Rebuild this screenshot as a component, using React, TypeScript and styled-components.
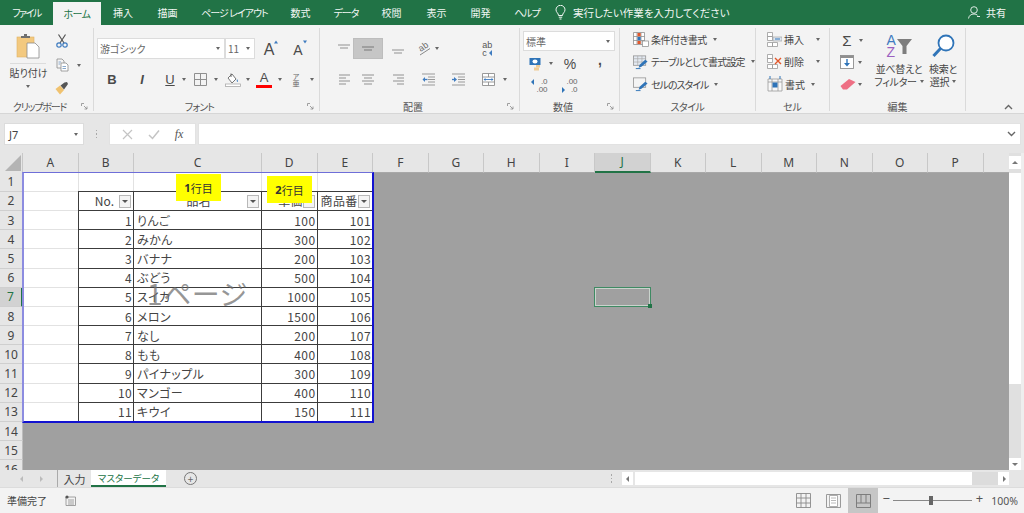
import styled, { createGlobalStyle } from 'styled-components'

const GlobalStyle = createGlobalStyle`
  html, body { margin: 0; padding: 0; background: #f3f3f3; }
  body {
    font-family: "Noto Sans CJK JP", "Noto Sans", sans-serif;
    font-feature-settings: "palt";
    color: #444;
    overflow: hidden;
  }
`

const Page = styled.div`
  width: 1024px;
  height: 513px;
  display: flex;
  flex-direction: column;
  overflow: hidden;
`

/* title bar */
const TitleBar = styled.div`
  height: 25px;
  flex: none;
  background: #217346;
  display: flex;
  align-items: center;
  color: #f2f7f4;
  font-size: 10px;
`
const Tab = styled.div<{ $w: number; $active?: boolean; $ls?: number }>`
  width: ${p => p.$w}px;
  flex: none;
  height: ${p => (p.$active ? '23px' : '100%')};
  display: flex;
  align-items: center;
  justify-content: center;
  letter-spacing: ${p => p.$ls ?? 0}px;
  margin-top: ${p => (p.$active ? '2px' : '0')};
  background: ${p => (p.$active ? '#f3f3f3' : 'transparent')};
  color: ${p => (p.$active ? '#217346' : 'inherit')};
`
const TellMe = styled.div`
  display: flex;
  align-items: center;
  gap: 7px;
  margin-left: 2px;
  flex: 1;
  font-size: 10.5px;
`
const Share = styled.div`
  display: flex;
  align-items: center;
  gap: 6px;
  margin-right: 18px;
`

/* ribbon */
const Ribbon = styled.div`
  height: 89px;
  flex: none;
  display: flex;
  box-sizing: border-box;
  padding: 3px 0 0;
  background: #f3f3f3;
  border-bottom: 1px solid #d6d6d6;
`
const Group = styled.div<{ $w: number }>`
  width: ${p => p.$w}px;
  flex: none;
  box-sizing: border-box;
  margin-bottom: 2px;
  border-right: 1px solid #dadada;
  display: flex;
  flex-direction: column;
`
const GroupBody = styled.div<{ $pl?: number; $row?: boolean }>`
  height: 73px;
  flex: none;
  display: flex;
  flex-direction: ${p => (p.$row ? 'row' : 'column')};
  padding-left: ${p => p.$pl ?? 0}px;
`
const GroupLabel = styled.div<{ $pr?: number; $ls?: number }>`
  position: relative;
  flex: 1;
  text-align: center;
  box-sizing: border-box;
  padding-right: ${p => p.$pr ?? 0}px;
  font-size: 10px;
  line-height: 11px;
  letter-spacing: ${p => p.$ls ?? 0}px;
  color: #555;
`
const Launcher = styled.svg`
  position: absolute;
  right: 5px;
  top: 2px;
`
const ToolRow = styled.div<{ $mt?: number; $h?: number }>`
  display: flex;
  align-items: center;
  height: ${p => p.$h ?? 21}px;
  margin-top: ${p => p.$mt ?? 0}px;
`
const Slot = styled.div<{ $w: number; $on?: boolean }>`
  width: ${p => p.$w}px;
  height: 100%;
  flex: none;
  display: flex;
  align-items: center;
  justify-content: center;
  gap: 3px;
  box-sizing: border-box;
  background: ${p => (p.$on ? '#c6c6c6' : 'transparent')};
  border: ${p => (p.$on ? '1px solid #bdbdbd' : 'none')};
`
const Caret = styled.span`
  width: 0;
  height: 0;
  flex: none;
  border-left: 2.5px solid transparent;
  border-right: 2.5px solid transparent;
  border-top: 3px solid #666;
`
const PasteButton = styled.div`
  width: 51px;
  margin-left: 2px;
  flex: none;
  display: flex;
  flex-direction: column;
  align-items: center;
  padding-top: 5px;
  font-size: 10px;
`
const PasteLabel = styled.div`
  width: 36px;
  margin-top: 4px;
  padding-top: 2px;
  border-top: 1px solid #dcdcdc;
  text-align: center;
  line-height: 14px;
  white-space: nowrap;
  margin-bottom: 5px;
`
const ClipTools = styled.div`
  display: flex;
  flex-direction: column;
  width: 40px;
`
const SelectBox = styled.div<{ $w: number; $h?: number }>`
  width: ${p => p.$w}px;
  height: ${p => p.$h ?? 21}px;
  flex: none;
  box-sizing: border-box;
  background: #fff;
  border: 1px solid #dcdcdc;
  display: flex;
  align-items: center;
  justify-content: space-between;
  padding: 0 4px 0 2px;
  font-size: 10px;
  color: #666;
`
const LetterTool = styled.span<{ $size?: number; $bold?: boolean; $italic?: boolean; $under?: boolean; $up?: number }>`
  font-family: "Liberation Sans", sans-serif;
  font-size: ${p => p.$size ?? 13}px;
  font-weight: ${p => (p.$bold ? 700 : 400)};
  font-style: ${p => (p.$italic ? 'italic' : 'normal')};
  text-decoration: ${p => (p.$under ? 'underline' : 'none')};
  margin-top: ${p => -(p.$up ?? 0)}px;
  color: #4a4a4a;
  line-height: 1;
`
const GrowWrap = styled.span`
  position: relative;
  display: inline-block;
  line-height: 1;
`
const GrowMark = styled.svg`
  position: absolute;
  right: -4px;
  top: 0;
`
const FontColorTool = styled.span`
  display: flex;
  flex-direction: column;
  align-items: center;
  font-family: "Liberation Sans", sans-serif;
  font-size: 13px;
  line-height: 12px;
  color: #4a4a4a;
`
const RedBar = styled.span`
  width: 16px;
  height: 3px;
  margin-top: 1px;
  background: #f00;
`
const KanaTool = styled.span`
  display: flex;
  flex-direction: column;
  align-items: center;
  font-size: 7px;
  line-height: 7px;
  color: #666;
`
const WrapTool = styled.span`
  display: flex;
  flex-direction: column;
  font-size: 9px;
  line-height: 8px;
  font-family: "Liberation Sans", sans-serif;
  color: #555;
`
const WrapLine = styled.span`
  display: flex;
  align-items: center;
  gap: 1px;
`
const DecimalTool = styled.span`
  display: grid;
  grid-template-columns: auto auto;
  font-family: "Liberation Sans", sans-serif;
  font-size: 8px;
  line-height: 8px;
  color: #666;
  justify-items: end;
  align-items: center;
`
const StyleRow = styled.div<{ $pl?: number; $ls?: number }>`
  display: flex;
  align-items: center;
  height: 22.5px;
  padding-left: ${p => p.$pl ?? 13}px;
  font-size: 10px;
  letter-spacing: ${p => p.$ls ?? 0}px;
  gap: 2px;
  white-space: nowrap;
  svg { flex: none; }
`
const CaretGap = styled.span<{ $w: number }>`
  flex: none;
  width: ${p => p.$w}px;
`
const RibbonEnd = styled.div`
  flex: 1;
  display: flex;
  justify-content: flex-end;
  align-items: flex-end;
  padding: 0 11px 3px 0;
`
const EditColumn = styled.div`
  width: 42px;
  flex: none;
  display: flex;
  flex-direction: column;
`
const BigTool = styled.div<{ $w: number }>`
  width: ${p => p.$w}px;
  flex: none;
  display: flex;
  flex-direction: column;
  align-items: center;
  padding-top: 6px;
  font-size: 10px;
  line-height: 12.5px;
  letter-spacing: -0.3px;
  white-space: nowrap;
`
const BigLabel = styled.div`
  margin-top: 5px;
  text-align: center;
  display: flex;
  flex-direction: column;
  align-items: center;
`
const InlineLine = styled.span`
  display: flex;
  align-items: center;
  gap: 3px;
`
const SortLetters = styled.span`
  display: flex;
  flex-direction: column;
  font-family: "Liberation Sans", sans-serif;
  font-size: 14px;
  line-height: 12px;
  margin-right: 1px;
`
const SortA = styled.span`
  color: #3f7cc0;
`
const SortZ = styled.span`
  color: #9a5fc0;
`

/* formula bar */
const FormulaBar = styled.div`
  height: 39px;
  flex: none;
  box-sizing: border-box;
  background: #e6e6e6;
  display: flex;
  padding: 9px 4px 8px 4px;
`
const NameBox = styled.div`
  width: 80px;
  height: 22px;
  box-sizing: border-box;
  background: #fff;
  border: 1px solid #dcdcdc;
  display: flex;
  align-items: center;
  justify-content: space-between;
  padding: 0 5px 0 4px;
  font-family: "Noto Sans", sans-serif;
  font-size: 11px;
`
const Grip = styled.div`
  width: 25px;
  display: flex;
  flex-direction: column;
  align-items: center;
  justify-content: center;
  gap: 2px;
`
const GripDot = styled.span`
  width: 1.5px;
  height: 1.5px;
  background: #a8a8a8;
`
const FxBox = styled.div`
  width: 87px;
  height: 22px;
  box-sizing: border-box;
  background: #fff;
  border: 1px solid #e2e2e2;
  display: flex;
  align-items: center;
  justify-content: space-around;
  padding: 0 4px;
  margin-right: 2px;
`
const FxText = styled.span`
  font-family: "Liberation Serif", serif;
  font-style: italic;
  font-size: 12px;
  color: #555;
`
const FormulaInput = styled.div`
  flex: 1;
  margin-right: -1px;
  height: 22px;
  box-sizing: border-box;
  background: #fff;
  border: 1px solid #e2e2e2;
  display: flex;
  align-items: center;
  justify-content: flex-end;
  padding-right: 4px;
`

/* sheet */
const SheetArea = styled.div`
  height: 317px;
  flex: none;
  display: flex;
  background: #e6e6e6;
`
const GridView = styled.div`
  position: relative;
  width: 1009px;
  flex: none;
  overflow: hidden;
`
const SheetGrid = styled.div`
  display: grid;
  grid-template-columns: 23px 55.5px 55.5px 128px repeat(14, 55.5px);
  grid-template-rows: 19.6px;
  grid-auto-rows: 19.2px;
`
const Corner = styled.div`
  background: #e6e6e6;
  border-right: 1px solid #c8c8c8;
  display: flex;
  align-items: flex-end;
  justify-content: flex-end;
  padding: 0 1px 2px 0;
  box-sizing: border-box;
`
const ColHead = styled.div<{ $active?: boolean }>`
  box-sizing: border-box;
  display: flex;
  align-items: center;
  justify-content: center;
  font-family: "Noto Sans", sans-serif;
  font-size: 12px;
  background: ${p => (p.$active ? '#d2d2d2' : '#e6e6e6')};
  color: ${p => (p.$active ? '#217346' : '#444')};
  border-right: 1px solid #c8c8c8;
  border-bottom: ${p => (p.$active ? '2px solid #217346' : '1px solid #a8a8a8')};
`
const RowHead = styled.div<{ $active?: boolean }>`
  box-sizing: border-box;
  display: flex;
  align-items: center;
  justify-content: center;
  font-family: "Noto Sans", sans-serif;
  font-size: 12px;
  background: ${p => (p.$active ? '#d2d2d2' : '#e6e6e6')};
  color: ${p => (p.$active ? '#217346' : '#444')};
  border-bottom: 1px solid #cfcfcf;
  border-right: ${p => (p.$active ? '2px solid #217346' : '1px solid #bdbdbd')};
`
const Cell = styled.div<{ $kind: 'blank' | 'grid' | 'table'; $right?: boolean }>`
  position: relative;
  box-sizing: border-box;
  min-width: 0;
  overflow: hidden;
  display: flex;
  align-items: center;
  justify-content: ${p => (p.$right ? 'flex-end' : 'flex-start')};
  padding: 0 1px 0 3px;
  font-size: 12px;
  letter-spacing: 0.4px;
  white-space: nowrap;
  background: ${p => (p.$kind === 'blank' ? '#a0a0a0' : '#fff')};
  border-right: ${p =>
    p.$kind === 'blank' ? 'none' : p.$kind === 'grid' ? '1px solid #e2e2e2' : '1px solid #3c3c3c'};
  border-bottom: ${p =>
    p.$kind === 'blank' ? 'none' : p.$kind === 'table' ? '1px solid #3c3c3c' : '1px solid #e2e2e2'};
`
const HeadText = styled.span<{ $center?: boolean; $pr?: number }>`
  flex: 1;
  text-align: ${p => (p.$center ? 'center' : 'right')};
  padding-right: ${p => p.$pr ?? 0}px;
  letter-spacing: 0;
`
const FilterButton = styled.div`
  position: absolute;
  right: 2px;
  top: 3px;
  width: 12px;
  height: 13px;
  box-sizing: border-box;
  background: #f4f4f4;
  border: 1px solid #b8b8b8;
  display: flex;
  align-items: center;
  justify-content: center;
`
const PageFrame = styled.div`
  position: absolute;
  left: 22px;
  top: 19px;
  width: 352px;
  height: 251px;
  box-sizing: border-box;
  border-left: 2px solid #8c8ce0;
  border-top: 1px solid #6e6ed8;
  border-right: 2px solid #1212d0;
  border-bottom: 2px solid #1212d0;
  pointer-events: none;
`
const TableRule = styled.div<{ $vertical?: boolean }>`
  position: absolute;
  left: 78px;
  top: 38px;
  width: ${p => (p.$vertical ? '1px' : '295px')};
  height: ${p => (p.$vertical ? '231px' : '1px')};
  background: #3c3c3c;
`
const YellowNote = styled.div<{ $x: number; $y: number }>`
  position: absolute;
  left: ${p => p.$x}px;
  top: ${p => p.$y}px;
  width: 45px;
  height: 27px;
  background: #ffff00;
  display: flex;
  align-items: center;
  justify-content: center;
  font-size: 11px;
  color: #333;
`
const NoteDigit = styled.b`
  font-family: "Noto Sans", sans-serif;
`
const Watermark = styled.div`
  position: absolute;
  left: 147px;
  top: 120px;
  font-size: 28px;
  line-height: 40px;
  letter-spacing: 0.5px;
  color: rgba(110, 110, 110, 0.72);
  white-space: nowrap;
  pointer-events: none;
`
const Selection = styled.div`
  position: absolute;
  left: 594px;
  top: 134px;
  width: 57px;
  height: 20px;
  box-sizing: border-box;
  border: 1.5px solid #3f8a63;
  box-shadow: inset 0 0 0 1px #c9d3cc;
`
const FillHandle = styled.span`
  position: absolute;
  right: -2px;
  bottom: -2px;
  width: 4px;
  height: 4px;
  background: #217346;
`

/* scrollbars */
const VScroll = styled.div`
  width: 12px;
  flex: none;
  box-sizing: border-box;
  padding-top: 3px;
  background: #e0e0e0;
  display: flex;
  flex-direction: column;
`
const ScrollButton = styled.div<{ $w?: number; $h?: number }>`
  width: ${p => p.$w ?? 12}px;
  height: ${p => p.$h ?? 12}px;
  flex: none;
  background: #fff;
  display: flex;
  align-items: center;
  justify-content: center;
`
const VThumb = styled.div`
  height: 211px;
  flex: none;
  margin-top: 4px;
  background: #fff;
`
const Spacer = styled.div`
  flex: 1;
`
const EdgeStrip = styled.div`
  flex: 1;
  background: #eeeeee;
`
const TabsRow = styled.div`
  height: 17px;
  flex: none;
  background: #e6e6e6;
  display: flex;
  align-items: center;
  font-size: 11px;
`
const TabNav = styled.div`
  width: 58px;
  flex: none;
  height: 100%;
  display: flex;
  align-items: center;
  justify-content: center;
  gap: 13px;
  box-sizing: border-box;
  padding-left: 6px;
  border-right: 1px solid #aaa;
`
const SheetTab = styled.div<{ $active?: boolean; $w: number }>`
  width: ${p => p.$w}px;
  flex: none;
  height: 100%;
  display: flex;
  align-items: center;
  justify-content: center;
  box-sizing: border-box;
  font-size: ${p => (p.$active ? '9.5px' : '11px')};
  background: ${p => (p.$active ? '#fff' : 'transparent')};
  color: ${p => (p.$active ? '#217346' : '#444')};
  border-bottom: ${p => (p.$active ? '2px solid #217346' : 'none')};
`
const AddSheet = styled.div`
  margin-left: 18px;
  width: 11px;
  height: 11px;
  flex: none;
  border: 1px solid #777;
  border-radius: 50%;
  color: #666;
  display: flex;
  align-items: center;
  justify-content: center;
  font-size: 10px;
  line-height: 1;
`
const TabGrip = styled(Grip)`
  margin-left: auto;
  width: 21px;
`
const HThumb = styled.div`
  width: 337px;
  height: 13px;
  margin-left: 2px;
  background: #fff;
  flex: none;
`
const HTrack = styled.div`
  width: 26px;
  height: 13px;
  flex: none;
  background: #dcdcdc;
`
const HEnd = styled.div`
  width: 15px;
  flex: none;
`

/* status bar */
const StatusBar = styled.div`
  flex: 1;
  background: #f3f3f3;
  border-top: 1px solid #dcdcdc;
  display: flex;
  align-items: stretch;
  font-size: 10px;
  padding-left: 7px;
`
const StatusText = styled.div`
  display: flex;
  align-items: center;
  gap: 18px;
  flex: 1;
`
const ViewButton = styled.div<{ $w: number; $on?: boolean }>`
  width: ${p => p.$w}px;
  flex: none;
  display: flex;
  align-items: center;
  justify-content: center;
  background: ${p => (p.$on ? '#c6c6c6' : 'transparent')};
`
const Zoom = styled.div`
  display: flex;
  align-items: center;
  padding: 0 6px 0 4px;
  gap: 3px;
  font-family: "Noto Sans", sans-serif;
  font-size: 10.5px;
`
const ZoomSign = styled.span`
  font-size: 13px;
  line-height: 13px;
  margin-top: -5px;
  color: #555;
`
const ZoomTrack = styled.div`
  position: relative;
  width: 79px;
  height: 1px;
  background: #888;
  margin-right: 1px;
`
const ZoomThumb = styled.span`
  position: absolute;
  left: 36px;
  top: -4px;
  width: 4px;
  height: 9px;
  background: #666;
`
const ZoomValue = styled.span`
  margin-left: 5px;
  color: #555;
`

/* icons */
const Launch = () => (
  <Launcher width="7" height="7" viewBox="0 0 7 7">
    <path d="M0.5 3V0.5H3M3 3L6 6M6 3.5V6H3.5" fill="none" stroke="#8a8a8a" strokeWidth="0.8" />
  </Launcher>
)

const Bars = ({ rows, w = 16, h = 14, color = '#9a9a9a' }: { rows: number[][]; w?: number; h?: number; color?: string }) => (
  <svg width={w} height={h} viewBox={`0 0 ${w} ${h}`}>
    {rows.map(([x1, x2, y]) => (
      <line key={`${x1}-${y}`} x1={x1} x2={x2} y1={y} y2={y} stroke={color} strokeWidth="1.1" />
    ))}
  </svg>
)

const PasteIcon = () => (
  <svg width="24" height="26" viewBox="0 0 24 26">
    <rect x="1" y="4" width="17" height="20" fill="#f3c97f" stroke="#e0b264" strokeWidth="0.6" />
    <path d="M5 5V3H8V1H11V3H14V5Z" fill="#6f6f6f" />
    <path d="M11 10H19L23 14V25H11Z" fill="#fff" stroke="#8a8a8a" strokeWidth="0.8" />
  </svg>
)
const ScissorsIcon = () => (
  <svg width="12" height="14" viewBox="0 0 12 14">
    <path d="M2.5 0.5L8 9M9.5 0.5L4 9" stroke="#555" strokeWidth="1.2" fill="none" />
    <circle cx="3" cy="11" r="2.2" fill="none" stroke="#3f7cc0" strokeWidth="1.2" />
    <circle cx="9" cy="11" r="2.2" fill="none" stroke="#3f7cc0" strokeWidth="1.2" />
  </svg>
)
const CopyIcon = () => (
  <svg width="13" height="14" viewBox="0 0 13 14">
    <path d="M1 1H6L8 3V10H1Z" fill="#f5f5f5" stroke="#8a8a8a" strokeWidth="0.8" />
    <path d="M5 5H10L12 7V13H5Z" fill="#fff" stroke="#8a8a8a" strokeWidth="0.8" />
    <path d="M2.5 4H5M2.5 6H4M6.5 8.5H10M6.5 10.5H10" stroke="#6b93bf" strokeWidth="0.8" />
  </svg>
)
const BrushIcon = () => (
  <svg width="14" height="13" viewBox="0 0 14 13">
    <path d="M0.5 7L5 3.5L9 8L5 12.5Z" fill="#f0c26f" />
    <path d="M5.5 3.5L9.5 0.5L12 0L13 2L9 7.5Z" fill="#555" />
  </svg>
)
const BorderIcon = () => (
  <svg width="13" height="13" viewBox="0 0 13 13">
    <path d="M0.5 0.5H12.5V12.5H0.5ZM6.5 0.5V12.5M0.5 6.5H12.5" fill="none" stroke="#8f8f8f" />
  </svg>
)
const FillIcon = () => (
  <svg width="16" height="15" viewBox="0 0 16 15">
    <path d="M3 6L7 2L11 7L7 11Z" fill="#fff" stroke="#666" strokeWidth="0.9" />
    <path d="M6 1.5V5" stroke="#666" />
    <path d="M12 7C13 8.5 13.5 9.5 12.5 10C11.5 9.5 11.5 8.5 12 7Z" fill="#4a86c5" />
    <rect x="0.5" y="12" width="15" height="2.5" fill="#fff" stroke="#aaa" strokeWidth="0.8" />
  </svg>
)
const OrientIcon = () => (
  <svg width="15" height="15" viewBox="0 0 15 15">
    <text x="2" y="9" fontSize="9" fill="#666" fontFamily="Liberation Sans" transform="rotate(-35 6 7)">ab</text>
    <path d="M3 14L13 7.5" stroke="#7a7a7a" strokeWidth="0.9" />
  </svg>
)
const IndentIcon = ({ flip }: { flip?: boolean }) => (
  <svg width="13" height="13" viewBox="0 0 13 13">
    <path d="M0 1H13M0 12H13M6 4H13M6 6.5H13M6 9H13" stroke="#999" strokeWidth="1" />
    <path d={flip ? 'M5 6.5L2 4V9Z' : 'M0.5 6.5L3 4V9Z'} fill="#3f7cc0" />
    <path d={flip ? 'M0 6.5H3' : 'M3 6.5H5.5'} stroke="#3f7cc0" strokeWidth="1.3" />
  </svg>
)
const MergeIcon = () => (
  <svg width="13" height="13" viewBox="0 0 13 13">
    <path d="M0.5 0.5H12.5V12.5H0.5ZM0.5 4H12.5M0.5 9H12.5M6.5 0.5V4M6.5 9V12.5" fill="#fff" stroke="#8f8f8f" strokeWidth="0.9" />
    <path d="M2 6.5H11" stroke="#3f7cc0" strokeWidth="0.9" />
    <path d="M1.5 6.5L3.5 5V8ZM11.5 6.5L9.5 5V8Z" fill="#3f7cc0" />
  </svg>
)
const CurrencyIcon = () => (
  <svg width="14" height="14" viewBox="0 0 14 14">
    <rect x="0.5" y="1" width="11" height="7" fill="#2f74b8" />
    <ellipse cx="6" cy="4.5" rx="2.5" ry="2" fill="#fff" />
    <rect x="7" y="8" width="4" height="2.5" fill="#f0cc96" />
    <rect x="5" y="10.5" width="5" height="3" fill="#f0cc96" />
  </svg>
)
const CondIcon = () => (
  <svg width="16" height="16" viewBox="0 0 16 16">
    <path d="M0.5 1.5H11.5V13.5H0.5ZM4 1.5V13.5M8 1.5V13.5M0.5 5.5H11.5M0.5 9.5H11.5" fill="#fff" stroke="#8f8f8f" strokeWidth="0.8" />
    <rect x="4.5" y="2" width="3.2" height="3.2" fill="#e2572b" />
    <rect x="4.5" y="6" width="3.2" height="3.2" fill="#2f74b8" />
    <rect x="4.5" y="10" width="3.2" height="3" fill="#e2572b" />
    <rect x="9.5" y="10" width="6" height="5.5" fill="#fff" stroke="#888" strokeWidth="0.7" />
  </svg>
)
const TableIcon = ({ plain }: { plain?: boolean }) => (
  <svg width="16" height="16" viewBox="0 0 17 16">
    <rect x="0.5" y="1.5" width="13" height="10" fill={plain ? '#f4f4f4' : '#e3e9f1'} stroke="#8f8f8f" strokeWidth="0.8" />
    {!plain && <path d="M0.5 4.5H13.5M0.5 8H13.5M5 1.5V11.5M9.5 1.5V11.5" stroke="#a8a8a8" strokeWidth="0.7" />}
    <path d="M7 11L13 5.5L15.5 7.5L9 13L6 14Z" fill="#2f74b8" />
    <path d="M3 15H8" stroke="#2f74b8" strokeWidth="1" />
  </svg>
)
const CellsIcon = ({ mark }: { mark: 'insert' | 'delete' }) => (
  <svg width="15" height="15" viewBox="0 0 15 15">
    <path d="M0.5 0.5H5.5V4.5H0.5ZM0.5 4.5H5.5V8.5H0.5ZM0.5 10.5H5.5V14.5H0.5ZM5.5 10.5H10.5V14.5H5.5Z" fill="#fff" stroke="#9a9a9a" strokeWidth="0.8" />
    {mark === 'insert' ? (
      <>
        <rect x="6" y="5" width="9" height="4" fill="#dde6f0" stroke="#9a9a9a" strokeWidth="0.6" />
        <path d="M8 7H13" stroke="#2f74b8" strokeWidth="1" />
      </>
    ) : (
      <path d="M8 4L14 10M14 4L8 10" stroke="#e2572b" strokeWidth="1.4" />
    )}
  </svg>
)
const FormatIcon = () => (
  <svg width="16" height="16" viewBox="0 0 16 16">
    <path d="M1 3H15V15H1ZM1 6H15M5 3V15M11 3V15" fill="#f8f8f8" stroke="#9a9a9a" strokeWidth="0.8" />
    <rect x="5.5" y="6.5" width="5" height="5" fill="#2f74b8" />
    <path d="M3 0V3M13 0V3" stroke="#2f74b8" strokeWidth="1" />
  </svg>
)
const FillDownIcon = () => (
  <svg width="14" height="14" viewBox="0 0 14 14">
    <rect x="0.5" y="0.5" width="13" height="13" fill="#fff" stroke="#8f8f8f" strokeWidth="0.9" />
    <rect x="0.5" y="0.5" width="13" height="2.5" fill="#8f8f8f" />
    <path d="M7 4V10" stroke="#2f74b8" strokeWidth="1.4" />
    <path d="M4 8L7 11.5L10 8Z" fill="#2f74b8" />
  </svg>
)
const EraserIcon = () => (
  <svg width="16" height="12" viewBox="0 0 16 12">
    <path d="M0.5 8L9 1L15.5 4L7 11.5H3Z" fill="#ee6f84" />
  </svg>
)
const FunnelIcon = () => (
  <svg width="15" height="15" viewBox="0 0 15 15">
    <path d="M0 0H15L9.5 7V15H5.5V7Z" fill="#7d7d7d" />
  </svg>
)
const SearchIcon = () => (
  <svg width="23" height="24" viewBox="0 0 23 24">
    <circle cx="14" cy="9" r="7.5" fill="#fff" stroke="#2f74b8" strokeWidth="1.8" />
    <path d="M8.5 14.5L1.5 22" stroke="#2f74b8" strokeWidth="3" />
  </svg>
)
const Bulb = () => (
  <svg width="11" height="15" viewBox="0 0 11 15">
    <path d="M3.5 10.5C3.5 8 1 7.5 1 4.8A4.5 4.5 0 0 1 10 4.8C10 7.5 7.5 8 7.5 10.5Z" fill="none" stroke="#f2f7f4" strokeWidth="1" />
    <path d="M3.8 12.2H7.2M4.5 14H6.5" stroke="#f2f7f4" strokeWidth="1" />
  </svg>
)
const Person = () => (
  <svg width="12" height="13" viewBox="0 0 12 13">
    <circle cx="6" cy="4" r="3.3" fill="none" stroke="#f2f7f4" strokeWidth="0.9" />
    <path d="M0.5 12.5C1 9.5 3 8 6 8C7.5 8 8.5 8.4 9.5 9.2M9 10.5H12" fill="none" stroke="#f2f7f4" strokeWidth="0.9" />
  </svg>
)
const Chevron = ({ up }: { up?: boolean }) => (
  <svg width="9" height="6" viewBox="0 0 9 6">
    <path d={up ? 'M1 5L4.5 1.5L8 5' : 'M1 1L4.5 4.5L8 1'} fill="none" stroke="#666" strokeWidth="1.4" />
  </svg>
)
const Tri = ({ dir, color = '#777' }: { dir: 'up' | 'down' | 'left' | 'right'; color?: string }) => {
  const d = { up: 'M0 4L3 1L6 4Z', down: 'M0 2H6L3 5Z', left: 'M4 0V6L1 3Z', right: 'M2 0V6L5 3Z' }[dir]
  return (
    <svg width="6" height="6" viewBox="0 0 6 6">
      <path d={d} fill={color} />
    </svg>
  )
}
const NormalViewIcon = () => (
  <svg width="15" height="15" viewBox="0 0 15 15">
    <path d="M0.5 0.5H14.5V14.5H0.5ZM5 0.5V14.5M10 0.5V14.5M0.5 5H14.5M0.5 10H14.5" fill="none" stroke="#8a8a8a" strokeWidth="0.9" />
  </svg>
)
const PageViewIcon = () => (
  <svg width="15" height="14" viewBox="0 0 15 14">
    <path d="M0.5 0.5H14.5V13.5H0.5Z" fill="none" stroke="#9a9a9a" />
    <path d="M3.5 1.5H11.5V12.5H3.5Z" fill="#fff" stroke="#9a9a9a" strokeWidth="0.8" />
    <path d="M5 4H10M5 6.5H10M5 9H10" stroke="#a8a8a8" strokeWidth="0.8" />
  </svg>
)
const BreakViewIcon = () => (
  <svg width="15" height="14" viewBox="0 0 15 14">
    <path d="M0.5 0.5H14.5V13.5H0.5ZM5 0.5V9M10 0.5V9M0.5 9H14.5" fill="none" stroke="#7d7d7d" />
  </svg>
)
const MacroIcon = () => (
  <svg width="11" height="11" viewBox="0 0 11 11">
    <path d="M1 2H10.5V10.5H1ZM3 5H9M3 7H9M3 9H9" fill="none" stroke="#8a8a8a" strokeWidth="0.8" />
    <circle cx="2" cy="2" r="1.6" fill="#555" />
  </svg>
)

/* data */
const columns = 'ABCDEFGHIJKLMNOPQ'.split('')
const products: [number, string, number, number][] = [
  [1, 'りんご', 100, 101],
  [2, 'みかん', 300, 102],
  [3, 'バナナ', 200, 103],
  [4, 'ぶどう', 500, 104],
  [5, 'スイカ', 1000, 105],
  [6, 'メロン', 1500, 106],
  [7, 'なし', 200, 107],
  [8, 'もも', 400, 108],
  [9, 'パイナップル', 300, 109],
  [10, 'マンゴー', 400, 110],
  [11, 'キウイ', 150, 111],
]
const restBlank = Array.from({ length: 12 })

const Filter = () => (
  <FilterButton>
    <Tri dir="down" color="#555" />
  </FilterButton>
)

function SheetRows() {
  const rows = []
  for (let r = 1; r <= 16; r++) {
    const p = r >= 3 && r <= 13 ? products[r - 3] : null
    rows.push(<RowHead key={`h${r}`} $active={r === 7}>{r}</RowHead>)
    if (r > 13) {
      columns.forEach(c => rows.push(<Cell key={`${c}${r}`} $kind="blank" />))
      continue
    }
    rows.push(<Cell key={`A${r}`} $kind="grid" />)
    if (r === 1) {
      rows.push(<Cell key="B1" $kind="grid" />, <Cell key="C1" $kind="grid" />, <Cell key="D1" $kind="grid" />, <Cell key="E1" $kind="grid" />)
    }
    else if (r === 2) {
      rows.push(
        <Cell key="B2" $kind="table"><HeadText $pr={18}>No.</HeadText><Filter /></Cell>,
        <Cell key="C2" $kind="table"><HeadText $center>品名</HeadText><Filter /></Cell>,
        <Cell key="D2" $kind="table"><HeadText $center>単価</HeadText><Filter /></Cell>,
        <Cell key="E2" $kind="table">商品番号<Filter /></Cell>,
      )
    }
    else if (p) {
      rows.push(
        <Cell key={`B${r}`} $kind="table" $right>{p[0]}</Cell>,
        <Cell key={`C${r}`} $kind="table">{p[1]}</Cell>,
        <Cell key={`D${r}`} $kind="table" $right>{p[2]}</Cell>,
        <Cell key={`E${r}`} $kind="table" $right>{p[3]}</Cell>,
      )
    }
    restBlank.forEach((_, i) => rows.push(<Cell key={`x${r}-${i}`} $kind="blank" />))
  }
  return <>{rows}</>
}

export default function App() {
  return (
    <Page>
      <GlobalStyle />
      <TitleBar>
        <Tab $w={53} $ls={-1.5}>ファイル</Tab>
        <Tab $w={48} $active $ls={-0.5}>ホーム</Tab>
        <Tab $w={44}>挿入</Tab>
        <Tab $w={45}>描画</Tab>
        <Tab $w={89} $ls={-1}>ページ レイアウト</Tab>
        <Tab $w={43}>数式</Tab>
        <Tab $w={48} $ls={-1}>データ</Tab>
        <Tab $w={43}>校閲</Tab>
        <Tab $w={47}>表示</Tab>
        <Tab $w={41}>開発</Tab>
        <Tab $w={52} $ls={-1}>ヘルプ</Tab>
        <TellMe><Bulb />実行したい作業を入力してください</TellMe>
        <Share><Person />共有</Share>
      </TitleBar>

      <Ribbon>
        <Group $w={94}>
          <GroupBody $row>
            <PasteButton>
              <PasteIcon />
              <PasteLabel>貼り付け</PasteLabel>
              <Caret />
            </PasteButton>
            <ClipTools>
              <ToolRow $mt={2} $h={22}><Slot $w={18}><ScissorsIcon /></Slot></ToolRow>
              <ToolRow $h={26}><Slot $w={18}><CopyIcon /></Slot><Slot $w={16}><Caret /></Slot></ToolRow>
              <ToolRow $h={20}><Slot $w={18}><BrushIcon /></Slot></ToolRow>
            </ClipTools>
          </GroupBody>
          <GroupLabel $pr={14} $ls={-1.2}>クリップボード<Launch /></GroupLabel>
        </Group>

        <Group $w={226}>
          <GroupBody $pl={3}>
            <ToolRow $mt={10}>
              <SelectBox $w={128}>游ゴシック<Caret /></SelectBox>
              <SelectBox $w={30}>11<Caret /></SelectBox>
              <Slot $w={28}><GrowWrap><LetterTool $size={16}>A</LetterTool><GrowMark width="4" height="4" viewBox="0 0 4 4"><path d="M0 3.5L2 0.5L4 3.5Z" fill="#3f7cc0" /></GrowMark></GrowWrap></Slot>
              <Slot $w={30}><GrowWrap><LetterTool $size={14}>A</LetterTool><GrowMark width="4" height="4" viewBox="0 0 4 4"><path d="M0 0.5H4L2 3.5Z" fill="#3f7cc0" /></GrowMark></GrowWrap></Slot>
            </ToolRow>
            <ToolRow $mt={10}>
              <Slot $w={3} />
              <Slot $w={24}><LetterTool $bold>B</LetterTool></Slot>
              <Slot $w={36}><LetterTool $italic $bold>I</LetterTool></Slot>
              <Slot $w={20}><LetterTool $under>U</LetterTool></Slot>
              <Slot $w={8}><Caret /></Slot>
              <Slot $w={24}><BorderIcon /></Slot>
              <Slot $w={8}><Caret /></Slot>
              <Slot $w={25}><FillIcon /></Slot>
              <Slot $w={6}><Caret /></Slot>
              <Slot $w={26}><FontColorTool>A<RedBar /></FontColorTool></Slot>
              <Slot $w={6}><Caret /></Slot>
              <Slot $w={26}><KanaTool><span>ア</span><span>亜</span></KanaTool></Slot>
              <Slot $w={5}><Caret /></Slot>
            </ToolRow>
          </GroupBody>
          <GroupLabel $pr={14} $ls={-0.8}>フォント<Launch /></GroupLabel>
        </Group>

        <Group $w={200}>
          <GroupBody $pl={15}>
            <ToolRow $mt={10}>
              <Slot $w={18}><Bars rows={[[2, 14, 3], [4, 12, 6]]} /></Slot>
              <Slot $w={30} $on><Bars rows={[[2, 14, 5], [4, 12, 8]]} color="#808080" /></Slot>
              <Slot $w={30}><Bars rows={[[2, 14, 8], [4, 12, 11]]} /></Slot>
              <Slot $w={30}><OrientIcon /><Caret /></Slot>
              <Slot $w={30} />
              <Slot $w={30}>
                <WrapTool>
                  <span>ab</span>
                  <WrapLine>c<Tri dir="left" color="#3f7cc0" /></WrapLine>
                </WrapTool>
              </Slot>
            </ToolRow>
            <ToolRow $mt={10}>
              <Slot $w={20}><Bars rows={[[2, 13, 2], [2, 9, 5], [2, 13, 8], [2, 9, 11]]} /></Slot>
              <Slot $w={26}><Bars rows={[[2, 14, 2], [4, 12, 5], [2, 14, 8], [4, 12, 11]]} /></Slot>
              <Slot $w={34}><Bars rows={[[3, 14, 2], [7, 14, 5], [3, 14, 8], [7, 14, 11]]} /></Slot>
              <Slot $w={26}><IndentIcon /></Slot>
              <Slot $w={34}><IndentIcon flip /></Slot>
              <Slot $w={26}><MergeIcon /></Slot>
              <Slot $w={8}><Caret /></Slot>
            </ToolRow>
          </GroupBody>
          <GroupLabel $pr={13}>配置<Launch /></GroupLabel>
        </Group>

        <Group $w={100}>
          <GroupBody $pl={3}>
            <ToolRow $mt={3} $h={20}>
              <SelectBox $w={92} $h={20}>標準<Caret /></SelectBox>
            </ToolRow>
            <ToolRow $mt={3} $h={19}>
              <Slot $w={25}><CurrencyIcon /></Slot>
              <Slot $w={6}><Caret /></Slot>
              <Slot $w={32}><LetterTool $size={14}>%</LetterTool></Slot>
              <Slot $w={28}><LetterTool $size={14} $bold $up={8}>,</LetterTool></Slot>
            </ToolRow>
            <ToolRow $mt={3} $h={20}>
              <Slot $w={32}><DecimalTool><Tri dir="left" color="#2f74b8" /><span>.0</span><span /><span>.00</span></DecimalTool></Slot>
              <Slot $w={28}><DecimalTool><span /><span>.00</span><Tri dir="right" color="#2f74b8" /><span>.0</span></DecimalTool></Slot>
            </ToolRow>
          </GroupBody>
          <GroupLabel $pr={13}>数値<Launch /></GroupLabel>
        </Group>

        <Group $w={136}>
          <GroupBody>
            <CaretGap $w={1} />
            <StyleRow $ls={-0.5}><CondIcon />条件付き書式<CaretGap $w={2} /><Caret /></StyleRow>
            <StyleRow $ls={-0.8}><TableIcon />テーブルとして書式設定<CaretGap $w={2} /><Caret /></StyleRow>
            <StyleRow $ls={-1}><TableIcon plain />セルのスタイル<CaretGap $w={2} /><Caret /></StyleRow>
          </GroupBody>
          <GroupLabel $ls={-0.5}>スタイル</GroupLabel>
        </Group>

        <Group $w={74}>
          <GroupBody>
            <CaretGap $w={1} />
            <StyleRow $pl={11}><CellsIcon mark="insert" />挿入<CaretGap $w={8} /><Caret /></StyleRow>
            <StyleRow $pl={11}><CellsIcon mark="delete" />削除<CaretGap $w={8} /><Caret /></StyleRow>
            <StyleRow $pl={11}><FormatIcon />書式<CaretGap $w={2} /><Caret /></StyleRow>
          </GroupBody>
          <GroupLabel>セル</GroupLabel>
        </Group>

        <Group $w={136}>
          <GroupBody $row>
            <EditColumn>
              <ToolRow $mt={2} $h={21}><Slot $w={10} /><Slot $w={14}><LetterTool $size={15}>Σ</LetterTool></Slot><Slot $w={14}><Caret /></Slot></ToolRow>
              <ToolRow $h={22}><Slot $w={10} /><Slot $w={14}><FillDownIcon /></Slot><Slot $w={12}><Caret /></Slot></ToolRow>
              <ToolRow $h={22}><Slot $w={10} /><Slot $w={16}><EraserIcon /></Slot><Slot $w={8}><Caret /></Slot></ToolRow>
            </EditColumn>
            <BigTool $w={54}>
              <ToolRow $h={24}>
                <SortLetters><SortA>A</SortA><SortZ>Z</SortZ></SortLetters>
                <FunnelIcon />
              </ToolRow>
              <BigLabel>
                <span>並べ替えと</span>
                <InlineLine>フィルター<Caret /></InlineLine>
              </BigLabel>
            </BigTool>
            <BigTool $w={34}>
              <ToolRow $h={24}><SearchIcon /></ToolRow>
              <BigLabel>
                <span>検索と</span>
                <InlineLine>選択<Caret /></InlineLine>
              </BigLabel>
            </BigTool>
          </GroupBody>
          <GroupLabel>編集</GroupLabel>
        </Group>

        <RibbonEnd><Chevron up /></RibbonEnd>
      </Ribbon>

      <FormulaBar>
        <NameBox>J7<Caret /></NameBox>
        <Grip><GripDot /><GripDot /><GripDot /></Grip>
        <FxBox>
          <svg width="11" height="11" viewBox="0 0 11 11"><path d="M1 1L10 10M10 1L1 10" stroke="#c4c4c4" strokeWidth="1.2" /></svg>
          <svg width="12" height="11" viewBox="0 0 12 11"><path d="M1 6L4.5 9.5L11 1.5" fill="none" stroke="#c4c4c4" strokeWidth="1.5" /></svg>
          <FxText>fx</FxText>
        </FxBox>
        <FormulaInput><Chevron /></FormulaInput>
      </FormulaBar>

      <SheetArea>
        <GridView>
          <SheetGrid>
            <Corner>
              <svg width="16" height="16" viewBox="0 0 16 16"><path d="M16 0V16H0Z" fill="#b4b4b4" /></svg>
            </Corner>
            {columns.map(c => <ColHead key={c} $active={c === 'J'}>{c === 'Q' ? '' : c}</ColHead>)}
            <SheetRows />
          </SheetGrid>
          <TableRule />
          <TableRule $vertical />
          <PageFrame />
          <YellowNote $x={176} $y={21}><NoteDigit>1</NoteDigit>行目</YellowNote>
          <YellowNote $x={267} $y={23}><NoteDigit>2</NoteDigit>行目</YellowNote>
          <Watermark>1ページ</Watermark>
          <Selection><FillHandle /></Selection>
        </GridView>
        <VScroll>
          <ScrollButton $h={13}><Tri dir="up" /></ScrollButton>
          <VThumb />
          <Spacer />
          <ScrollButton><Tri dir="down" /></ScrollButton>
        </VScroll>
        <EdgeStrip />
      </SheetArea>

      <TabsRow>
        <TabNav><Tri dir="left" color="#bbb" /><Tri dir="right" color="#bbb" /></TabNav>
        <SheetTab $w={33}>入力</SheetTab>
        <SheetTab $w={75} $active>マスターデータ</SheetTab>
        <AddSheet>+</AddSheet>
        <TabGrip><GripDot /><GripDot /><GripDot /></TabGrip>
        <ScrollButton $w={11} $h={13}><Tri dir="left" /></ScrollButton>
        <HThumb />
        <HTrack />
        <ScrollButton $w={11} $h={13}><Tri dir="right" /></ScrollButton>
        <HEnd />
      </TabsRow>

      <StatusBar>
        <StatusText>準備完了<MacroIcon /></StatusText>
        <ViewButton $w={30}><NormalViewIcon /></ViewButton>
        <ViewButton $w={30}><PageViewIcon /></ViewButton>
        <ViewButton $w={30} $on><BreakViewIcon /></ViewButton>
        <Zoom>
          <ZoomSign>−</ZoomSign>
          <ZoomTrack><ZoomThumb /></ZoomTrack>
          <ZoomSign>+</ZoomSign>
          <ZoomValue>100%</ZoomValue>
        </Zoom>
      </StatusBar>
    </Page>
  )
}
